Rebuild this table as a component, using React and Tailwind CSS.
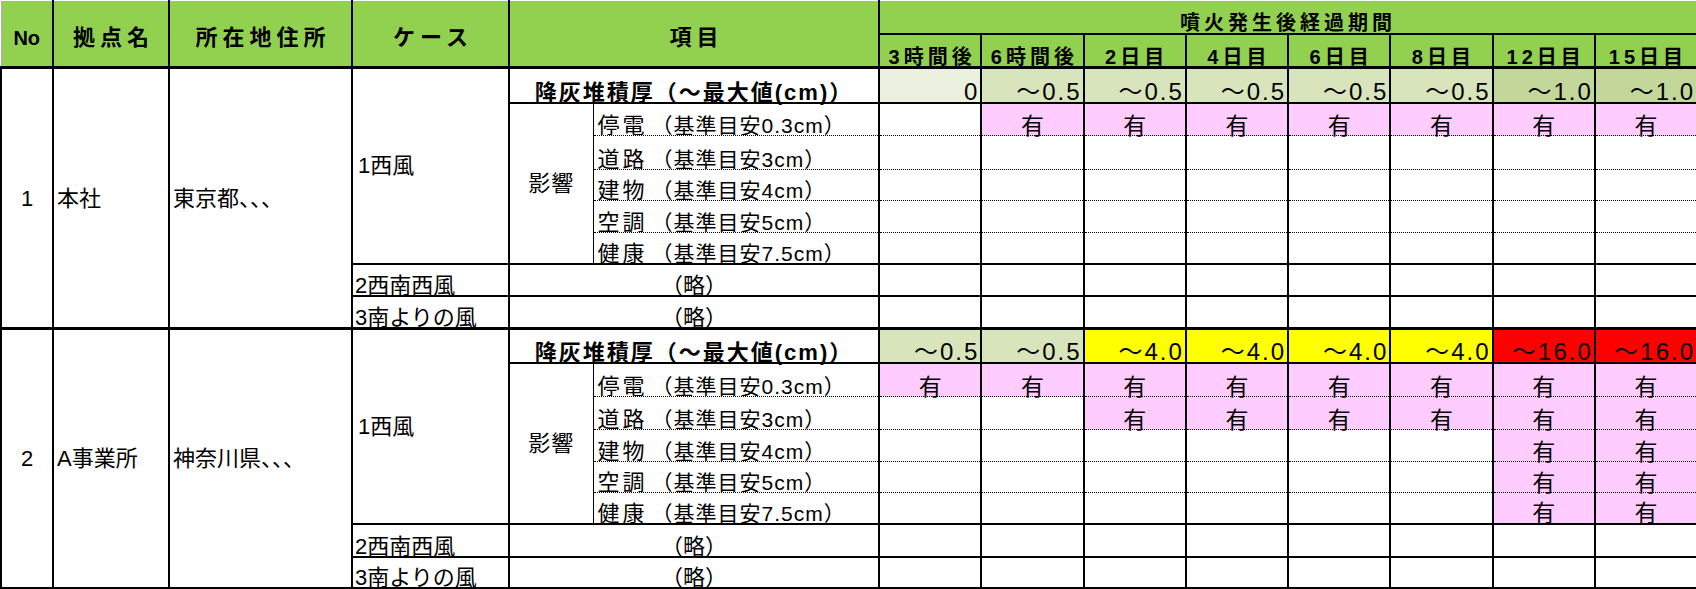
import React from 'react';

const TIMES = ['3時間後', '6時間後', '2日目', '4日目', '6日目', '8日目', '12日目', '15日目'];
const ITEMS = [
    ['停電', '0.3cm'],
    ['道路', '3cm'],
    ['建物', '4cm'],
    ['空調', '5cm'],
    ['健康', '7.5cm'],
];

// 拠点ごとのデータ
const BLOCKS = [
    {
        no: '1',
        name: '本社',
        addr: '東京都、、、',
        last: false,
        heights: ['h-[35px]', 'h-[33px]', 'h-[34px]', 'h-[31px]', 'h-[32px]', 'h-[31px]', 'h-[32px]', 'h-[33px]'],
        depth: [
            ['0', 'bg-[#ebf1de]'],
            ['～0.5', 'bg-[#d8e4bc]'],
            ['～0.5', 'bg-[#d8e4bc]'],
            ['～0.5', 'bg-[#d8e4bc]'],
            ['～0.5', 'bg-[#d8e4bc]'],
            ['～0.5', 'bg-[#d8e4bc]'],
            ['～1.0', 'bg-[#c4d79b]'],
            ['～1.0', 'bg-[#c4d79b]'],
        ],
        effects: [
            [0, 1, 1, 1, 1, 1, 1, 1],
            [0, 0, 0, 0, 0, 0, 0, 0],
            [0, 0, 0, 0, 0, 0, 0, 0],
            [0, 0, 0, 0, 0, 0, 0, 0],
            [0, 0, 0, 0, 0, 0, 0, 0],
        ],
    },
    {
        no: '2',
        name: 'A事業所',
        addr: '神奈川県、、、',
        last: true,
        heights: ['h-[34px]', 'h-[34px]', 'h-[33px]', 'h-[32px]', 'h-[31px]', 'h-[31px]', 'h-[33px]', 'h-[31px]'],
        depth: [
            ['～0.5', 'bg-[#d8e4bc]'],
            ['～0.5', 'bg-[#d8e4bc]'],
            ['～4.0', 'bg-[#ffff00]'],
            ['～4.0', 'bg-[#ffff00]'],
            ['～4.0', 'bg-[#ffff00]'],
            ['～4.0', 'bg-[#ffff00]'],
            ['～16.0', 'bg-[#ff0000]'],
            ['～16.0', 'bg-[#ff0000]'],
        ],
        effects: [
            [1, 1, 1, 1, 1, 1, 1, 1],
            [0, 0, 1, 1, 1, 1, 1, 1],
            [0, 0, 0, 0, 0, 0, 1, 1],
            [0, 0, 0, 0, 0, 0, 1, 1],
            [0, 0, 0, 0, 0, 0, 1, 1],
        ],
    },
];

const Block = ({ b }) => {
    const bottom = b.last ? 'border-b-2' : 'border-b-[3px]';
    return (
        <>
            <tr className={b.heights[0]}>
                <td rowSpan={8} className={`border-l-2 border-r-2 ${bottom} border-black text-center align-middle text-[22px]`}>{b.no}</td>
                <td rowSpan={8} className={`border-r-2 ${bottom} border-black pl-[3px] align-middle text-[22px] whitespace-nowrap`}>{b.name}</td>
                <td rowSpan={8} className={`border-r-2 ${bottom} border-black pl-[3px] align-middle text-[22px] whitespace-nowrap`}>{b.addr}</td>
                <td rowSpan={6} className="border-r-2 border-b-2 border-black pl-[5px] align-middle text-[22px]">1西風</td>
                <td colSpan={2} className="border-r-2 border-b-2 border-black text-center align-bottom text-[22px] font-bold tracking-[2px] leading-[0.8] whitespace-nowrap">
                    降灰堆積厚（～最大値(cm)）
                </td>
                {b.depth.map(([v, bg], i) => (
                    <td key={i} className={`border-r-2 border-b-2 border-black ${bg} text-right pr-[1px] align-bottom text-[24px] tracking-[2px] leading-[0.8] whitespace-nowrap`}>
                        {v}
                    </td>
                ))}
            </tr>
            {ITEMS.map(([label, std], r) => {
                const line = r === 4 ? 'border-b-2' : '[border-bottom:1px_dotted_#000]';
                return (
                    <tr key={label} className={b.heights[r + 1]}>
                        {r === 0 && (
                            <td rowSpan={5} className="border-r border-b-2 border-black text-center align-middle text-[22px] tracking-[1px]">影響</td>
                        )}
                        <td className={`border-r-2 ${line} border-black pl-[4px] align-bottom leading-[0.8] whitespace-nowrap overflow-hidden`}>
                            <span className="text-[22px] tracking-[3px]">{label}</span>
                            <span className="text-[21px] tracking-[1px] pl-[4px]">（基準目安{std}）</span>
                        </td>
                        {b.effects[r].map((on, i) => (
                            <td key={i} className={`border-r-2 ${line} border-black ${on ? 'bg-[#ffccff]' : 'bg-white'} text-center align-bottom text-[23px] leading-[0.8]`}>
                                {on ? '有' : ''}
                            </td>
                        ))}
                    </tr>
                );
            })}
            {['2西南西風', '3南よりの風'].map((c, r) => {
                const line = r === 1 ? bottom : 'border-b-2';
                return (
                    <tr key={c} className={b.heights[6 + r]}>
                        <td className={`border-r-2 ${line} border-black pl-[2px] align-bottom text-[22px] leading-[0.8] whitespace-nowrap overflow-hidden`}>{c}</td>
                        <td colSpan={2} className={`border-r-2 ${line} border-black text-center align-bottom text-[22px] leading-[0.8]`}>（略）</td>
                        {TIMES.map((t) => (
                            <td key={t} className={`border-r-2 ${line} border-black`}></td>
                        ))}
                    </tr>
                );
            })}
        </>
    );
};

export default function App() {
    return (
        <div className="w-[1696px] h-[589px] overflow-hidden bg-white text-black [font-family:'Liberation_Sans','Noto_Sans_CJK_JP',sans-serif]">
            <table className="table-fixed border-collapse w-[1696px]">
                <colgroup>
                    <col className="w-[52px]" />
                    <col className="w-[116px]" />
                    <col className="w-[183px]" />
                    <col className="w-[157px]" />
                    <col className="w-[84px]" />
                    <col className="w-[286px]" />
                    {TIMES.map((t) => (
                        <col key={t} className="w-[102.25px]" />
                    ))}
                </colgroup>
                <thead>
                    <tr className="h-[33px]">
                        <th rowSpan={2} className="border-l border-l-[#b0b0b0] border-t border-t-white border-r-2 border-r-black border-b-[3px] border-b-black bg-[#92d050] text-[20px] font-bold pt-[8px]">No</th>
                        <th rowSpan={2} className="border-t border-t-white border-r-2 border-r-black border-b-[3px] border-b-black bg-[#92d050] text-[22px] font-bold tracking-[5px] pl-[5px] pt-[8px]">拠点名</th>
                        <th rowSpan={2} className="border-t border-t-white border-r-2 border-r-black border-b-[3px] border-b-black bg-[#92d050] text-[22px] font-bold tracking-[5px] pl-[5px] pt-[8px]">所在地住所</th>
                        <th rowSpan={2} className="border-t border-t-white border-r-2 border-r-black border-b-[3px] border-b-black bg-[#92d050] text-[22px] font-bold tracking-[5px] pl-[5px] pt-[8px]">ケース</th>
                        <th rowSpan={2} colSpan={2} className="border-t border-t-white border-r-2 border-r-black border-b-[3px] border-b-black bg-[#92d050] text-[22px] font-bold tracking-[5px] pl-[5px] pt-[8px]">項目</th>
                        <th colSpan={8} className="border-t border-t-white border-r-2 border-r-black border-b-2 border-b-black bg-[#92d050] text-[20px] font-bold tracking-[4px] align-bottom leading-[0.9] pb-[1px]">噴火発生後経過期間</th>
                    </tr>
                    <tr className="h-[34px]">
                        {TIMES.map((t) => (
                            <th key={t} className="border-r-2 border-b-[3px] border-black bg-[#92d050] text-[20px] font-bold tracking-[4px] pl-[4px] align-bottom leading-[0.85] whitespace-nowrap">
                                {t}
                            </th>
                        ))}
                    </tr>
                </thead>
                <tbody>
                    {BLOCKS.map((b) => (
                        <Block key={b.no} b={b} />
                    ))}
                </tbody>
            </table>
        </div>
    );
}
